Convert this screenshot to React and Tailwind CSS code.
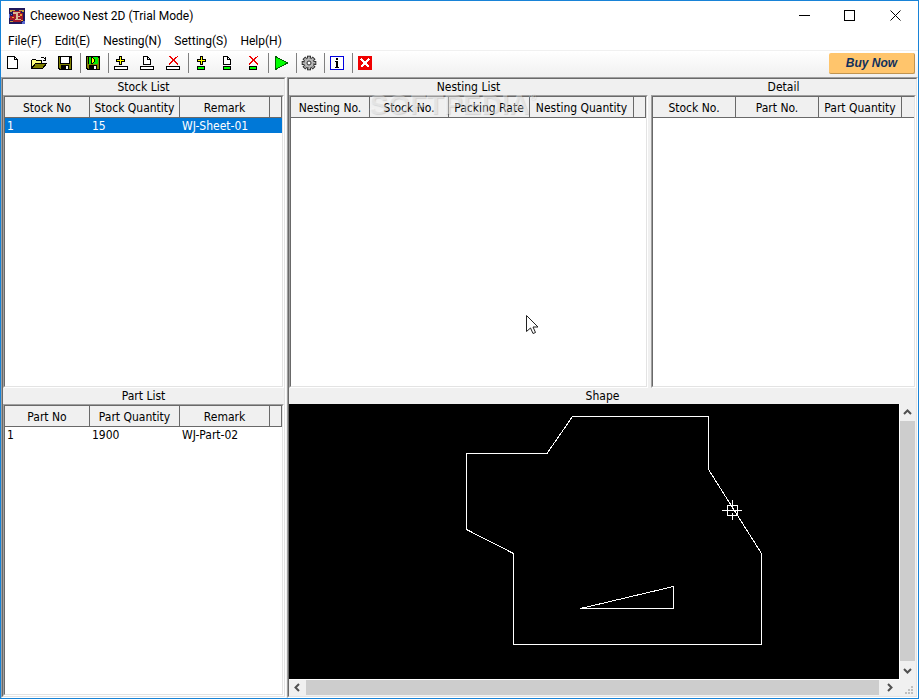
import React from "react";

const uiFont = "font-['Roboto','Noto_Sans',sans-serif]";
const listFont = "font-['DejaVu_Sans_Condensed','DejaVu_Sans',sans-serif]";

/* ---------- toolbar drawings, 16 x 16 ---------- */

function Icon({ children }) {
  return (
    <svg width="16" height="16" viewBox="0 0 16 16" shapeRendering="crispEdges" aria-hidden="true" className="block">
      {children}
    </svg>
  );
}

function Page({ x = 0, y = 0, w = 8, h = 9 }) {
  return (
    <g transform={`translate(${x} ${y})`} fill="none" stroke="#000">
      <path d={`M.5 .5H${w - 3.5}L${w - 0.5} 3.5V${h - 0.5}H.5Z`} fill="#fff" />
      <path d={`M${w - 3.5} .5V3.5H${w - 0.5}`} />
    </g>
  );
}

function Plus({ x }) {
  return (
    <g transform={`translate(${x} 1)`}>
      <path d="M3 0H6V3H9V6H6V9H3V6H0V3H3Z" fill="#000" />
      <path d="M4 1H5V4H8V5H5V8H4V5H1V4H4Z" fill="#ffff00" />
    </g>
  );
}

function RedX({ x }) {
  return (
    <g transform={`translate(${x} 1)`} fill="#f00000">
      <path d="M0 0H2V1H3V2H4V3H5V4H6V5H7V6H8V7H9V9H8V8H7V7H6V6H5V5H4V4H3V3H2V2H1V1H0Z" />
      <path d="M8 0H9V1H8V2H7V3H6V4H5V5H4V6H3V7H2V8H1V9H0V7H1V6H2V5H3V4H4V3H5V2H6V1H8Z" />
    </g>
  );
}

const StockBar = () => <rect x="1.5" y="11.5" width="13" height="3" fill="#fff" stroke="#000" />;
const PartBar = () => <rect x="4.5" y="11.5" width="7" height="3" fill="#00ff00" stroke="#000" />;

function Disk({ play }) {
  return (
    <Icon>
      <path d="M1 1H15V15H2L1 14Z" fill="#000" />
      <path d="M2 2H3V9H13V3H14V14H12V10H4V14H3L2 13Z" fill="#808000" />
      {play ? (
        <>
          <rect x="4" y="2" width="9" height="7" fill="#00f000" />
          <path d="M6 2H8V3H9V4H10V7H9V8H8V9H6Z" fill="#000" />
          <path d="M7 3H8V4H9V7H8V8H7Z" fill="#ffff00" />
        </>
      ) : (
        <rect x="4" y="2" width="8" height="6" fill="#fff" />
      )}
      <rect x="9" y="11" width="2" height="3" fill="#fff" />
    </Icon>
  );
}

const OpenIcon = () => (
  <Icon>
    <path d="M9.500 3.500L10.500 2.500H12.500L14.500 4.500M14.500 2V5.500H11.500" fill="none" stroke="#000" />
    <path d="M.5 13.500V5.500L1.500 4.500H4.500L5.500 5.500H10.500V8.500" fill="#ffff80" stroke="#000" />
    <path d="M.5 13.500L4.500 8.500H15.500L11.500 13.500Z" fill="#808000" stroke="#000" />
  </Icon>
);

const GearIcon = () => (
  <svg width="16" height="16" viewBox="0 0 16 16" aria-hidden="true" className="block">
    <g fill="#b8b8b8" stroke="#303030">
      {[0, 45, 90, 135, 180, 225, 270, 315].map((a) => (
        <rect key={a} x="6.500" y="1.200" width="3" height="3" transform={`rotate(${a} 8 8)`} />
      ))}
      <circle cx="8" cy="8" r="5" stroke="none" />
      <circle cx="8" cy="8" r="5" fill="none" stroke="#505050" strokeDasharray="1.900 2.030" />
      <circle cx="8" cy="8" r="2" fill="#fff" />
    </g>
  </svg>
);

const groups = [
  [
    ["New", <Icon><Page x={2} y={1} w={11} h={13} /></Icon>],
    ["Open", <OpenIcon />],
    ["Save", <Disk />],
  ],
  [["Save nesting", <Disk play />]],
  [
    ["Add stock", <Icon><Plus x={3} /><StockBar /></Icon>],
    ["Edit stock", <Icon><Page x={4} y={1} /><StockBar /></Icon>],
    ["Delete stock", <Icon><RedX x={4} /><StockBar /></Icon>],
  ],
  [
    ["Add part", <Icon><Plus x={4} /><PartBar /></Icon>],
    ["Edit part", <Icon><Page x={4} y={1} /><PartBar /></Icon>],
    ["Delete part", <Icon><RedX x={4} /><PartBar /></Icon>],
  ],
  [["Run nesting", <Icon><path d="M2.500 1.500V14.500L14.500 8Z" fill="#00ff00" stroke="#006000" /></Icon>]],
  [["Settings", <GearIcon />]],
  [
    [
      "Information",
      <Icon>
        <rect x="1.500" y="1.500" width="13" height="13" rx="1" fill="#fff" stroke="#0000e0" />
        <path d="M7 3H9V5H7ZM6 6H9V12H10V13H6V12H7V7H6Z" fill="#000" />
      </Icon>,
    ],
  ],
  [
    [
      "Exit",
      <Icon>
        <rect x="1" y="1" width="14" height="14" rx="1" fill="#f00000" />
        <path d="M4 4L12 12M12 4L4 12" stroke="#fff" strokeWidth="2.500" />
      </Icon>,
    ],
  ],
];

const AppIcon = () => (
  <svg width="16" height="16" viewBox="0 0 16 16" shapeRendering="crispEdges" aria-hidden="true" className="block">
    <rect width="16" height="16" fill="#20185c" />
    <path d="M1 2H6V3H3V4H1ZM10 2H15V4H13V3H10ZM1 13H5V14H1Z" fill="#c8a040" />
    <path d="M4 3H12V5H14V12H12V14H4V12H1V8H4Z" fill="#a01828" />
    <path d="M4 4H11V5H9V8H11V9H9V11H12V12H6V11H7V6H4Z" fill="#d8b898" />
    <path d="M11 6H13V8H11ZM3 9H5V10H3ZM12 12H14V13H12Z" fill="#f0a030" />
    <path d="M0 6H1V10H0ZM14 13H16V16H13V14H14ZM2 6H3V7H2Z" fill="#5868d0" />
  </svg>
);

/* ---------- window parts ---------- */

function Sunken({ className = "", children }) {
  return (
    <div className={`flex min-h-0 min-w-0 flex-col border border-t-[#a0a0a0] border-l-[#a0a0a0] border-r-white border-b-white ${className}`}>
      <div className="flex min-h-0 min-w-0 flex-1 flex-col border border-t-[#696969] border-l-[#696969] border-r-[#e3e3e3] border-b-[#e3e3e3]">
        {children}
      </div>
    </div>
  );
}

function Grid({ title, cols, rows = [], selected = -1, open = false, className = "", children }) {
  return (
    <section className={`flex min-h-0 min-w-0 flex-col ${className}`}>
      <h2 className="h-4 text-center leading-4">{title}</h2>
      <Sunken className="flex-1">
        <div className="relative flex-1 overflow-hidden bg-white">
          <table className="w-full table-fixed border-separate border-spacing-0">
            <colgroup>
              {cols.map(([name, width]) => (
                <col key={name} className={width} />
              ))}
              <col />
            </colgroup>
            <thead className="bg-[#f0f0f0]">
              <tr>
                {cols.map(([name]) => (
                  <th key={name} className="h-[21px] whitespace-nowrap border-r border-b border-[#696969] p-0 pt-0.5 font-normal leading-[18px]">
                    {name}
                  </th>
                ))}
                <td className={`border-b border-[#696969] p-0 ${open ? "" : "border-r"}`} />
              </tr>
            </thead>
            <tbody>
              {rows.map((row, i) => (
                <tr key={i} className={i === selected ? "bg-[#0078d7] text-white" : ""}>
                  {row.map((cell) => (
                    <td key={cell} className="h-[15px] whitespace-nowrap p-0 pt-0.5 pl-0.5 leading-[13px]">
                      {cell}
                    </td>
                  ))}
                  <td className="p-0" />
                </tr>
              ))}
            </tbody>
          </table>
          {children}
        </div>
      </Sunken>
    </section>
  );
}

function Chevron({ turn }) {
  return (
    <svg width="9" height="9" viewBox="0 0 9 9" aria-hidden="true" className={turn}>
      <path d="M1 6L4.500 2.500L8 6" fill="none" stroke="#505050" strokeWidth="2" />
    </svg>
  );
}

function ShapeView() {
  return (
    <section className="flex min-h-0 flex-[308_1_0%] flex-col">
      <h2 className="h-4 text-center leading-4">Shape</h2>
      <div className="flex min-h-0 flex-1">
        <div className="min-w-0 flex-1 border-r border-b border-white bg-black">
          <svg viewBox="0 0 610 275" className="block h-full w-full" shapeRendering="crispEdges" role="img" aria-label="Part outline">
            <g fill="none" stroke="#fff">
              <path d="M177.500 49.500H258L283.500 12.500H419.500V65.500L472.500 149.500V240.500H224.500V149.500L177.500 125.500Z" />
              <path d="M291.500 204.500L384.500 182.500V204.500Z" />
              <path d="M438.500 101.500H448.500V111.500H438.500ZM433 106.500H441M445 106.500H453M443.500 96V104M443.500 109V116M441 106.500H446" />
            </g>
          </svg>
        </div>
        <div className="flex w-4 flex-col border-r border-[#f0f0f0] bg-[#f0f0f0]">
          <button aria-label="Scroll up" className="flex h-[17px] items-center justify-center"><Chevron turn="rotate-0" /></button>
          <div className="flex-1 bg-[#cdcdcd]" />
          <button aria-label="Scroll down" className="flex h-[19px] items-center justify-center"><Chevron turn="rotate-180" /></button>
        </div>
      </div>
      <div className="flex h-4 pb-px">
        <button aria-label="Scroll left" className="flex w-[17px] items-center justify-center"><Chevron turn="-rotate-90" /></button>
        <div className="flex-1 bg-[#cdcdcd]" />
        <button aria-label="Scroll right" className="flex w-[21px] items-center justify-center"><Chevron turn="rotate-90" /></button>
        <svg width="16" height="15" viewBox="0 0 16 15" shapeRendering="crispEdges" aria-hidden="true">
          <path d="M11 6h2v2h-2zM8 9h2v2h-2zM11 9h2v2h-2zM5 12h2v2h-2zM8 12h2v2h-2zM11 12h2v2h-2z" fill="#bfbfbf" />
        </svg>
      </div>
    </section>
  );
}

export default function App() {
  return (
    <div className={`flex h-screen w-full flex-col border border-[#1883d7] bg-white text-xs text-black ${uiFont}`}>
      <header className="flex h-[29px] shrink-0 items-center pl-2">
        <AppIcon />
        <h1 className="flex-1 pl-[5px]">Cheewoo Nest 2D (Trial Mode)</h1>
        <button aria-label="Minimize" className="flex h-full w-[46px] items-center justify-center">
          <svg width="11" height="11" shapeRendering="crispEdges"><path d="M0 5.500H11" stroke="#000" /></svg>
        </button>
        <button aria-label="Maximize" className="flex h-full w-[45px] items-center justify-center">
          <svg width="11" height="11" shapeRendering="crispEdges"><rect x=".5" y=".5" width="10" height="10" fill="none" stroke="#000" /></svg>
        </button>
        <button aria-label="Close" className="flex h-full w-[46px] items-center justify-center">
          <svg width="11" height="11"><path d="M.5 .5L10.500 10.500M10.500 .5L.5 10.500" stroke="#000" /></svg>
        </button>
      </header>

      <nav className="flex h-[21px] shrink-0 items-center gap-[13px] border-b border-[#f0f0f0] pl-[7px]">
        {["File(F)", "Edit(E)", "Nesting(N)", "Setting(S)", "Help(H)"].map((m) => (
          <button key={m} className="pt-0.5 leading-[18px]">{m}</button>
        ))}
      </nav>

      <div className="flex h-[26px] shrink-0 bg-linear-to-b from-white to-[#f0f0f0]">
        {groups.map((group, g) => (
          <div key={g} className="flex">
            {g > 0 && <div className="mt-0.5 mb-1 w-0.5 border-r border-[#808080]" />}
            {group.map(([name, icon]) => (
              <button key={name} aria-label={name} className="flex w-[26px] items-start pt-1 pl-1">{icon}</button>
            ))}
          </div>
        ))}
        <button className="mt-0.5 mr-[3px] ml-auto h-[21px] w-[86px] rounded-xs border-r border-b border-[#c09450] bg-[#ffc56c] font-['Liberation_Sans',sans-serif] text-xs leading-5 font-bold text-[#10305c] italic">
          Buy Now
        </button>
      </div>

      <main className={`flex min-h-0 flex-1 gap-px bg-[#f0f0f0] ${listFont}`}>
        <Sunken className="w-[285px] shrink-0">
          <Grid
            title="Stock List"
            className="flex-[309_1_0%]"
            cols={[["Stock No", "w-[85px]"], ["Stock Quantity", "w-[90px]"], ["Remark", "w-[90px]"]]}
            rows={[["1", "15", "WJ-Sheet-01"]]}
            selected={0}
          />
          <Grid
            title="Part List"
            className="flex-[308_1_0%]"
            cols={[["Part No", "w-[85px]"], ["Part Quantity", "w-[90px]"], ["Remark", "w-[90px]"]]}
            rows={[["1", "1900", "WJ-Part-02"]]}
          />
        </Sunken>
        <Sunken className="flex-1">
          <div className="flex min-h-0 flex-[309_1_0%] gap-[3px]">
            <div className="relative flex min-w-0 flex-[359_1_0%]">
              <Grid
                title="Nesting List"
                className="flex-1"
                cols={[["Nesting No.", "w-[79px]"], ["Stock No.", "w-[79px]"], ["Packing Rate", "w-[81px]"], ["Nesting Quantity", "w-[104px]"]]}
              >
                <svg width="13" height="20" viewBox="0 0 13 20" aria-hidden="true" className="absolute top-[218px] left-[235px]">
                  <path d="M.5 .5V16.500L4.500 13L7 18.500L9.500 17.500L7 12H12Z" fill="#fff" stroke="#222" />
                </svg>
              </Grid>
              <div className="pointer-events-none absolute top-3 left-20 flex font-['Liberation_Sans',sans-serif] text-[28px] leading-7 font-bold text-white/40 [text-shadow:1px_1px_1px_rgba(0,0,0,0.12)]">
                SOFTPEDIA<span className="text-[9px] leading-3">®</span>
              </div>
            </div>
            <Grid
              title="Detail"
              open
              className="flex-[265_1_0%]"
              cols={[["Stock No.", "w-[83px]"], ["Part No.", "w-[83px]"], ["Part Quantity", "w-[83px]"]]}
            />
          </div>
          <ShapeView />
        </Sunken>
      </main>
    </div>
  );
}
